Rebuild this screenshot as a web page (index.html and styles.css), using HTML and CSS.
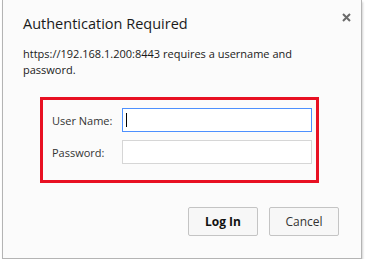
FILE: index.html
```html
<!DOCTYPE html>
<html lang="en">
<head>
    <meta charset="UTF-8">
    <title>Authentication Required</title>
    <link rel="stylesheet" href="styles.css">
</head>
<body>

<div class="dialog">
    <button class="close-btn" title="Close">
        <svg width="9" height="9" viewBox="0 0 9 9">
            <path d="M1 1 L8 8 M8 1 L1 8" stroke="#6b6b6b" stroke-width="2" />
        </svg>
    </button>

    <h2 class="title">Authentication Required</h2>

    <p class="message">https://192.168.1.200:8443 requires a username and password.</p>

    <div class="login-box">
        <div class="field-row">
            <label for="username">User Name:</label>
            <div class="field-wrap">
                <input id="username" class="field focused" type="text">
                <span class="caret"></span>
            </div>
        </div>
        <div class="field-row">
            <label for="password">Password:</label>
            <div class="field-wrap">
                <input id="password" class="field" type="password">
            </div>
        </div>
    </div>

    <div class="actions">
        <button class="action-btn primary">Log In</button>
        <button class="action-btn">Cancel</button>
    </div>
</div>

</body>
</html>
```

FILE: styles.css
```css
body {
    margin: 0;
    background: #ffffff;
    font-family: 'Open Sans', 'Noto Sans', sans-serif;
    color: #222;
}

.dialog {
    position: relative;
    box-sizing: border-box;
    width: 360px;
    height: 259px;
    margin-left: 2px;
    padding: 13px 20px 0 20px;
    background: #fbfbfb;
    border: 1px solid #b4b4b4;
    border-top: none;
    box-shadow: 1px 2px 2px rgba(0, 0, 0, 0.18);
}

.close-btn {
    position: absolute;
    top: 10px;
    right: 10px;
    padding: 0;
    border: none;
    background: none;
    cursor: pointer;
}

.title {
    margin: 0;
    font-size: 14.5px;
    font-weight: normal;
    line-height: 22px;
    color: #1a1a1a;
}

.message {
    margin: 11px 0 0 0;
    width: 300px;
    font-size: 11px;
    line-height: 16px;
    color: #1a1a1a;
}

.login-box {
    margin: 19px 0 0 17px;
    width: 279px;
    height: 86px;
    box-sizing: border-box;
    padding: 8px 4px 0 9px;
    border: 3px solid #e81123;
}

.field-row {
    display: flex;
    align-items: center;
    margin-bottom: 8px;
}

.field-row label {
    width: 70px;
    font-size: 11px;
    color: #333;
}

.field-wrap {
    position: relative;
}

.field {
    display: block;
    box-sizing: border-box;
    width: 190px;
    height: 24px;
    margin: 0;
    padding: 2px 4px;
    background: #fff;
    border: 1px solid #d6d6d6;
    outline: none;
    font-family: inherit;
}

.field.focused {
    border-color: #4d90fe;
}

.caret {
    position: absolute;
    left: 4px;
    top: 5px;
    width: 1px;
    height: 14px;
    background: #000;
}

.actions {
    display: flex;
    justify-content: flex-end;
    gap: 11px;
    margin-top: 24px;
    margin-right: 2px;
}

.action-btn {
    box-sizing: border-box;
    width: 70px;
    height: 29px;
    padding: 0;
    background: #f7f7f7;
    border: 1px solid #c4c4c4;
    border-radius: 2px;
    font-family: inherit;
    font-size: 12px;
    color: #333;
    cursor: pointer;
}

.action-btn.primary {
    font-weight: bold;
    color: #111;
}
```
